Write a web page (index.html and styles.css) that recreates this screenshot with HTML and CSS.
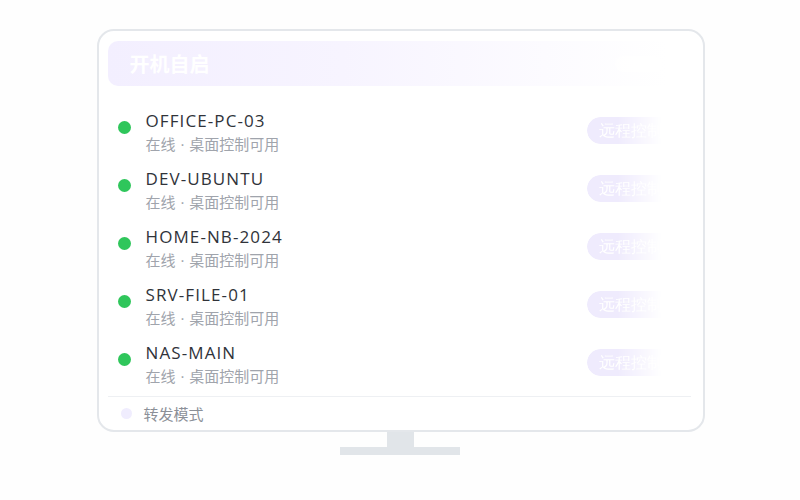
FILE: index.html
```html
<!DOCTYPE html>
<html lang="zh">
<head>
    <meta charset="UTF-8">
    <meta name="viewport" content="width=device-width, initial-scale=1.0">
    <title>开机自启</title>
    <link rel="stylesheet" href="styles.css">
</head>
<body>
    <div class="desk">
        <div class="monitor">
            <div class="header">
                <span class="title">开机自启</span>
                <span class="toggle"></span>
            </div>

            <div class="list">
                <div class="row">
                    <span class="dot"></span>
                    <div class="info">
                        <div class="name">OFFICE-PC-03</div>
                        <div class="sub">在线 · 桌面控制可用</div>
                    </div>
                    <span class="remote">远程控制</span>
                </div>
                <div class="row">
                    <span class="dot"></span>
                    <div class="info">
                        <div class="name">DEV-UBUNTU</div>
                        <div class="sub">在线 · 桌面控制可用</div>
                    </div>
                    <span class="remote">远程控制</span>
                </div>
                <div class="row">
                    <span class="dot"></span>
                    <div class="info">
                        <div class="name">HOME-NB-2024</div>
                        <div class="sub">在线 · 桌面控制可用</div>
                    </div>
                    <span class="remote">远程控制</span>
                </div>
                <div class="row">
                    <span class="dot"></span>
                    <div class="info">
                        <div class="name">SRV-FILE-01</div>
                        <div class="sub">在线 · 桌面控制可用</div>
                    </div>
                    <span class="remote">远程控制</span>
                </div>
                <div class="row">
                    <span class="dot"></span>
                    <div class="info">
                        <div class="name">NAS-MAIN</div>
                        <div class="sub">在线 · 桌面控制可用</div>
                    </div>
                    <span class="remote">远程控制</span>
                </div>
            </div>

            <div class="footer">
                <span class="mode-dot"></span>
                <span class="mode">转发模式</span>
            </div>
        </div>
        <div class="neck"></div>
        <div class="base"></div>
    </div>
</body>
</html>
```

FILE: styles.css
```css
body {
    margin: 0;
    background: #fefefe;
    font-family: "Open Sans", "Noto Sans CJK SC", sans-serif;
}
.desk {
    display: flex;
    flex-direction: column;
    align-items: center;
    padding-top: 29px;
}
.monitor {
    box-sizing: border-box;
    width: 608px;
    height: 403px;
    margin-left: 1px;
    border: 2px solid #e4e7eb;
    border-radius: 17px;
    background: #fff;
    padding: 10px 12px 0 9px;
    display: flex;
    flex-direction: column;
}
.header {
    height: 45px;
    border-radius: 10px;
    background: linear-gradient(90deg, #f3efff 0%, #f7f4ff 40%, #fcfbff 75%, #ffffff 96%);
    display: flex;
    align-items: center;
    padding: 0 16px 0 22px;
}
.title {
    color: #fff;
    font-size: 20px;
    font-weight: bold;
    font-family: "Noto Sans CJK SC", sans-serif;
    flex: 1;
}
.toggle {
    width: 48px;
    height: 16px;
    border-radius: 8px;
    background: rgba(255, 255, 255, 0.6);
    margin-right: 12px;
}
.list {
    margin-top: 17px;
}
.row {
    box-sizing: border-box;
    height: 58px;
    padding: 6px 16px 0 10px;
    display: flex;
    align-items: flex-start;
}
.dot {
    width: 13px;
    height: 13px;
    border-radius: 50%;
    background: #2fc65b;
    margin-top: 12px;
    margin-right: 15px;
    flex-shrink: 0;
}
.info {
    flex: 1;
}
.name {
    font-size: 17px;
    line-height: 24px;
    color: #30333a;
    letter-spacing: 1.1px;
}
.sub {
    font-size: 15px;
    line-height: 20px;
    margin-top: 1px;
    color: #a0a4ac;
    word-spacing: 1px;
}
.remote {
    margin-top: 8px;
    height: 27px;
    line-height: 27px;
    padding: 0 12px;
    border-radius: 14px;
    background: #efebfd;
    color: #fff;
    font-size: 16px;
    font-family: "Liberation Serif", serif;
    -webkit-mask-image: linear-gradient(90deg, #000 35%, rgba(0,0,0,0.2) 75%, transparent 85%);
    mask-image: linear-gradient(90deg, #000 35%, rgba(0,0,0,0.2) 75%, transparent 85%);
}
.footer {
    margin-top: 3px;
    border-top: 1px solid #eef0f3;
    height: 32px;
    display: flex;
    align-items: center;
    padding-left: 13px;
}
.mode-dot {
    width: 11px;
    height: 11px;
    border-radius: 50%;
    background: #f0edfe;
    margin-right: 12px;
}
.mode {
    font-size: 15px;
    color: #8c9098;
}
.neck {
    width: 27px;
    height: 15px;
    background: #e1e5e9;
}
.base {
    width: 120px;
    height: 8px;
    background: #e1e5e9;
}
```
